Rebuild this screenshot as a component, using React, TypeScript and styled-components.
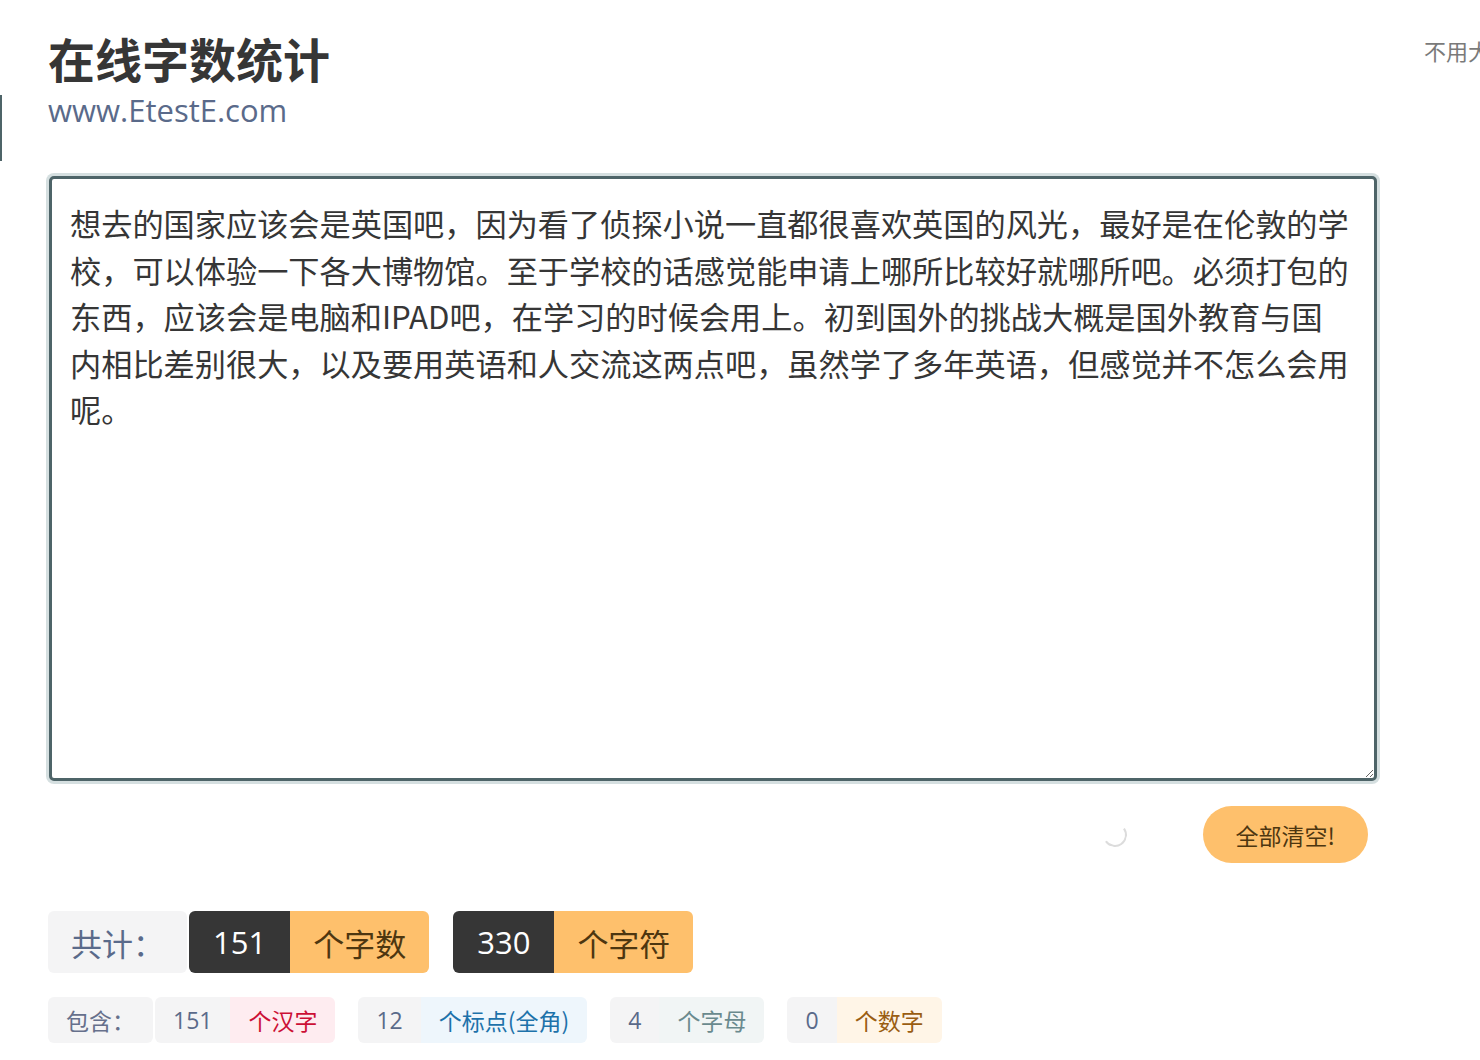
import * as React from 'react';
import styled, { createGlobalStyle } from 'styled-components';

const GlobalStyle = createGlobalStyle`
  html, body {
    margin: 0;
    padding: 0;
    background: #fff;
    overflow: hidden;
  }
  body {
    font-family: "Noto Sans", "Noto Sans CJK SC", sans-serif;
    color: #363636;
  }
`;

const CJK = `"Noto Sans CJK SC", "Noto Sans", sans-serif`;

const SAMPLE =
  '想去的国家应该会是英国吧，因为看了侦探小说一直都很喜欢英国的风光，最好是在伦敦的学校，可以体验一下各大博物馆。至于学校的话感觉能申请上哪所比较好就哪所吧。必须打包的东西，应该会是电脑和IPAD吧，在学习的时候会用上。初到国外的挑战大概是国外教育与国内相比差别很大，以及要用英语和人交流这两点吧，虽然学了多年英语，但感觉并不怎么会用呢。';

const Page = styled.div`
  position: relative;
  width: 1480px;
  height: 1060px;
  padding: 30px 0 0 48px;
  box-sizing: border-box;
`;

// thin mark stuck to the left edge of the window
const EdgeMark = styled.div`
  position: absolute;
  left: 0;
  top: 95px;
  width: 2px;
  height: 66px;
  background: #4e6468;
`;

const TopNote = styled.div`
  position: absolute;
  top: 34px;
  left: 1424px;
  white-space: nowrap;
  font-family: ${CJK};
  font-size: 22px;
  color: #7a7a7a;
`;

const Header = styled.header`
  display: flex;
  flex-direction: column;
`;

const Title = styled.h1`
  margin: 1px 0 0;
  font-family: ${CJK};
  font-size: 47px;
  font-weight: 700;
  line-height: 54px;
  color: #363636;
`;

const Subtitle = styled.div`
  margin-top: 5px;
  font-family: "Open Sans", "Noto Sans", sans-serif;
  font-size: 31px;
  line-height: 40px;
  color: #5a6a8a;
`;

const Editor = styled.textarea`
  display: block;
  margin: 46px 0 0 1px;
  width: 1328px;
  height: 605px;
  box-sizing: border-box;
  padding: 21px 24px 21px 18px;
  border: 3px solid #4e6468;
  border-radius: 5px;
  box-shadow: 0 0 0 3px #d5dfe0;
  font-family: ${CJK};
  font-size: 31.2px;
  line-height: 46.6px;
  color: #363636;
  resize: vertical;
  outline: none;
`;

const Actions = styled.div`
  display: flex;
  align-items: center;
  justify-content: flex-end;
  gap: 76px;
  width: 1320px;
  margin-top: 25px;
`;

const Spinner = styled.div`
  width: 20px;
  height: 20px;
  border-radius: 50%;
  border: 2px solid transparent;
  border-right-color: #dcdcdc;
  border-bottom-color: #dcdcdc;
  transform: rotate(10deg);
`;

const ClearButton = styled.button`
  height: 57px;
  padding: 0 33px;
  border: 0;
  border-radius: 29px;
  background: #fec06c;
  color: #4d3610;
  font-family: ${CJK};
  font-size: 23px;
  cursor: pointer;
`;

const TotalRow = styled.div`
  display: flex;
  align-items: center;
  gap: 24px;
  margin-top: 48px;
`;

const DetailRow = styled.div`
  display: flex;
  align-items: center;
  gap: 23px;
  margin-top: 24px;
`;

const Group = styled.div`
  display: flex;
  gap: 2px;
`;

const Addons = styled.div`
  display: flex;
  border-radius: 6px;
  overflow: hidden;
`;

const Tag = styled.span<{ $big?: boolean; $bg: string; $fg: string }>`
  display: inline-flex;
  align-items: center;
  height: ${p => (p.$big ? '62px' : '46px')};
  padding: ${p => (p.$big ? '0 23px' : '0 18px')};
  font-family: ${CJK};
  font-size: ${p => (p.$big ? '31px' : '23px')};
  background: ${p => p.$bg};
  color: ${p => p.$fg};
  white-space: nowrap;
`;

const NumTag = styled(Tag)`
  padding: ${p => (p.$big ? '0 24px' : '0 18px')};
  font-family: "Open Sans", "Noto Sans", sans-serif;
`;

const Label = styled(Tag)`
  border-radius: 6px;
`;

interface IDetail {
  count: number;
  unit: string;
  bg: string;
  fg: string;
}

const details: IDetail[] = [
  { count: 151, unit: '个汉字', bg: '#feecf0', fg: '#cc0f35' },
  { count: 12, unit: '个标点(全角)', bg: '#eef6fc', fg: '#1d72aa' },
  { count: 4, unit: '个字母', bg: '#f1f5f5', fg: '#6a8a8e' },
  { count: 0, unit: '个数字', bg: '#fff5e7', fg: '#9a5d12' },
];

export default function App() {
  const [text, setText] = React.useState(SAMPLE);

  return (
    <Page>
      <GlobalStyle />
      <EdgeMark />
      <TopNote>不用大写</TopNote>
      <Header>
        <Title>在线字数统计</Title>
        <Subtitle>www.EtestE.com</Subtitle>
      </Header>

      <Editor value={text} onChange={evt => setText(evt.target.value)} />

      <Actions>
        <Spinner />
        <ClearButton onClick={() => setText('')}>全部清空!</ClearButton>
      </Actions>

      <TotalRow>
        <Group>
          <Label $big $bg="#f4f4f5" $fg="#5a6a8a">共计：</Label>
          <Addons>
            <NumTag $big $bg="#363636" $fg="#fff">151</NumTag>
            <Tag $big $bg="#fec06c" $fg="#4d3610">个字数</Tag>
          </Addons>
        </Group>
        <Addons>
          <NumTag $big $bg="#363636" $fg="#fff">330</NumTag>
          <Tag $big $bg="#fec06c" $fg="#4d3610">个字符</Tag>
        </Addons>
      </TotalRow>

      <DetailRow>
        {details.map((d, i) => (
          <Group key={d.unit}>
            {i === 0 && <Label $bg="#f4f4f5" $fg="#66708c">包含：</Label>}
            <Addons>
              <NumTag $bg="#f4f4f5" $fg="#5a6a8a">{d.count}</NumTag>
              <Tag $bg={d.bg} $fg={d.fg}>{d.unit}</Tag>
            </Addons>
          </Group>
        ))}
      </DetailRow>
    </Page>
  );
}
